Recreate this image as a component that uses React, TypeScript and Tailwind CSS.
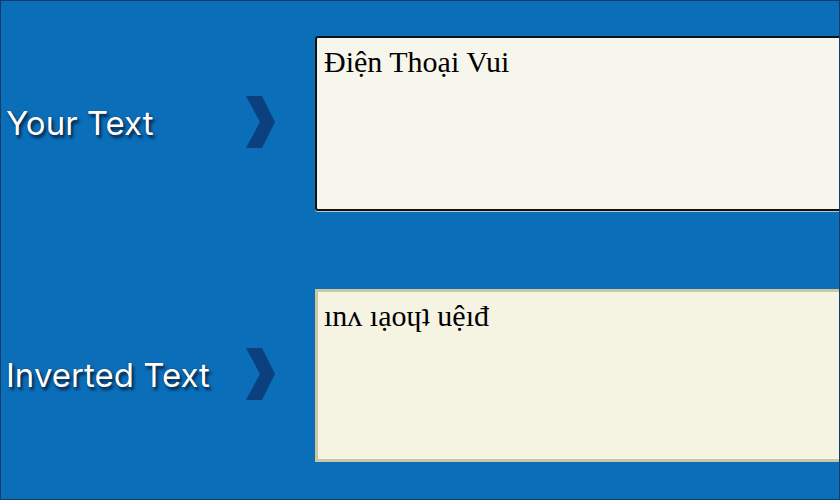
import { useState } from "react";

// maps a character to its upside-down twin
const flipMap: Record<string, string> = {
  a: "ɐ", b: "q", c: "ɔ", d: "p", e: "ǝ", f: "ɟ", g: "ƃ", h: "ɥ", i: "ı", j: "ɾ",
  k: "ʞ", l: "l", m: "ɯ", n: "u", o: "o", p: "d", q: "b", r: "ɹ", s: "s", t: "ʇ",
  u: "n", v: "ʌ", w: "ʍ", y: "ʎ", z: "z",
};

function flip(s: string) {
  return s
    .toLowerCase()
    .split("")
    .reverse()
    .map((c) => flipMap[c] ?? c)
    .join("");
}

function Chevron() {
  return (
    <svg width="30" height="52" viewBox="0 0 30 52" className="mb-[4px] shrink-0">
      <polygon points="1,0 17,0 30,26 17,52 1,52 15,26" fill="#0c3f7d" />
    </svg>
  );
}

function Label({ children }: { children: string }) {
  return (
    <div
      className="w-[244px] shrink-0 pl-[5px] text-[33px] leading-none text-white"
      style={{
        fontFamily: "Inter, 'DejaVu Sans', sans-serif",
        fontWeight: 400,
        textShadow: "2px 3px 3px rgba(4,24,50,0.85), 0 0 1px #0a1a30",
      }}
    >
      {children}
    </div>
  );
}

export default function App() {
  const [text, setText] = useState("Điện Thoại Vui");

  return (
    <div className="h-[500px] w-[840px] overflow-hidden border border-[#143a66] bg-[#0a6eb9]">
      <div className="flex flex-col gap-[78px] pt-[35px]">
        <div className="flex items-center">
          <Label>Your Text</Label>
          <Chevron />
          <textarea
            value={text}
            onChange={(e) => setText(e.target.value)}
            className="ml-[40px] h-[175px] w-[560px] shrink-0 resize-none rounded-[3px] border-2 border-[#111] bg-[#f7f6ec] px-[7px] pt-[1px] text-[30px] text-black shadow-[0_1px_0_#b9c6d4] outline-none"
            style={{ fontFamily: "'Liberation Serif', 'DejaVu Serif', serif" }}
          />
        </div>
        <div className="flex items-center">
          <Label>Inverted Text</Label>
          <Chevron />
          <textarea
            readOnly
            value={flip(text)}
            className="ml-[40px] h-[173px] w-[560px] shrink-0 resize-none border-[3px] border-[#cbc7a3] bg-[#f5f3e2] px-[6px] pt-[1px] text-[30px] text-black outline-none"
            style={{ fontFamily: "'Liberation Serif', 'DejaVu Serif', serif" }}
          />
        </div>
      </div>
    </div>
  );
}
